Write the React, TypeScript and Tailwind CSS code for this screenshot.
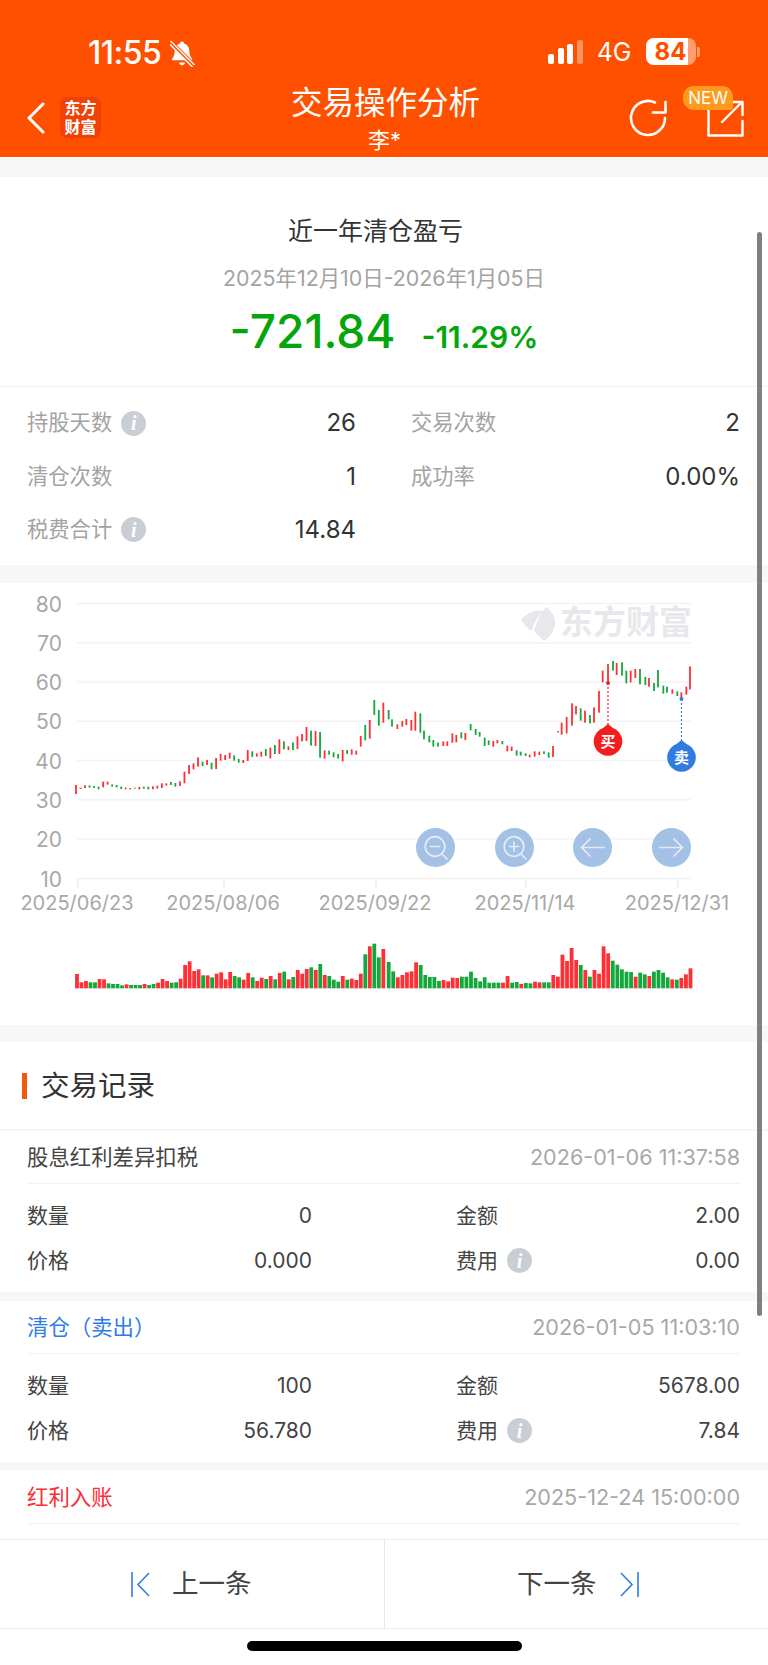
import React from "react";

const FONT = "[font-family:Inter,'Noto_Sans_CJK_SC',sans-serif]";

type C = [number, number, string];
const leftCandles: C[] = [
  [615,642,"r"],[623,627,"r"],[616,624,"r"],[616,623,"g"],[618,624,"g"],[620,628,"g"],[605,622,"r"],[605,614,"r"],[613,620,"g"],[615,622,"g"],[620,627,"g"],[623,628,"r"],[624,628,"r"],[623,626,"g"],[621,628,"r"],[620,626,"g"],[620,628,"g"],[619,628,"r"],[617,626,"r"],[610,624,"r"],[610,617,"r"],[606,615,"g"],[609,620,"g"],[604,618,"r"],[575,610,"r"],[555,582,"r"],[550,568,"r"],[532,560,"r"],[545,558,"g"],[540,555,"r"],[548,568,"g"],[534,567,"r"],[522,542,"r"],[525,540,"r"],[518,536,"r"],[526,542,"g"],[537,548,"g"],[540,549,"r"],[510,543,"r"],[514,531,"g"],[520,530,"r"],[515,530,"r"],[507,528,"g"],[503,535,"r"],[495,522,"g"],[478,522,"r"],[484,508,"g"],[499,510,"r"],[487,510,"g"],[469,507,"r"],[462,484,"r"],[441,483,"r"],[452,497,"g"],[453,498,"r"],[456,533,"g"],[511,536,"r"],[512,524,"g"],[517,532,"g"],[522,536,"g"],[510,544,"r"],[510,522,"g"],[508,524,"r"],[512,524,"r"],[468,500,"r"],[435,481,"g"],[420,476,"r"],[360,405,"g"],[390,437,"g"],[368,428,"r"],
];
const rightCandles: [number, number, number, string][] = [
  [14,390,418,"g"],[24,418,440,"g"],[40,433,447,"r"],[55,423,440,"r"],[67,417,435,"r"],[82,420,452,"r"],[94,395,452,"r"],[109,400,458,"g"],[120,452,478,"g"],[136,467,487,"g"],[148,480,500,"g"],[162,488,500,"g"],[178,484,498,"r"],[190,484,498,"r"],[205,460,488,"r"],[217,465,487,"r"],[232,457,475,"g"],[244,459,480,"r"],[260,432,451,"g"],[275,447,465,"g"],[287,456,470,"g"],[302,473,498,"g"],[314,481,495,"g"],[328,483,500,"r"],[340,480,490,"r"],[355,483,493,"g"],[370,497,514,"r"],[383,500,513,"r"],[398,511,527,"g"],[410,515,527,"g"],[425,520,528,"g"],[437,524,532,"r"],[452,514,530,"r"],[466,515,525,"r"],[480,514,522,"g"],[494,517,533,"g"],[507,498,531,"r"],[522,453,457,"r"],[533,428,464,"r"],[548,411,460,"r"],[564,370,437,"r"],[576,378,403,"r"],[590,385,422,"g"],[603,392,428,"r"],[618,405,430,"g"],[630,382,428,"r"],[645,333,398,"r"],[656,272,307,"r"],[672,252,308,"r"],[687,243,272,"g"],[698,249,285,"r"],[714,247,287,"g"],[727,272,310,"g"],[740,272,307,"r"],[754,267,294,"r"],[768,267,313,"g"],[784,291,315,"g"],[795,294,320,"r"],[810,309,333,"g"],[822,270,322,"g"],[838,317,341,"g"],[849,320,338,"g"],[865,328,341,"r"],[880,334,348,"g"],[892,337,355,"r"],[907,320,344,"r"],[918,259,328,"r"],
];
const leftVol: [number, string][] = [
  [1182,"r"],[1207,"r"],[1203,"r"],[1207,"g"],[1207,"g"],[1197,"r"],[1198,"r"],[1210,"g"],[1212,"g"],[1212,"g"],[1216,"g"],[1213,"r"],[1215,"g"],[1215,"g"],[1215,"g"],[1212,"r"],[1215,"g"],[1212,"g"],[1208,"r"],[1197,"r"],[1203,"r"],[1208,"g"],[1207,"g"],[1196,"r"],[1155,"r"],[1144,"r"],[1173,"r"],[1168,"r"],[1186,"g"],[1186,"r"],[1192,"g"],[1181,"r"],[1177,"r"],[1198,"r"],[1176,"r"],[1188,"g"],[1192,"g"],[1199,"r"],[1179,"r"],[1192,"g"],[1203,"r"],[1193,"r"],[1197,"g"],[1188,"r"],[1198,"g"],[1179,"r"],[1175,"g"],[1198,"r"],[1191,"g"],[1170,"r"],[1181,"r"],[1167,"r"],[1162,"g"],[1170,"r"],[1152,"g"],[1185,"r"],[1188,"g"],[1199,"g"],[1205,"g"],[1188,"r"],[1199,"g"],[1196,"r"],[1200,"r"],[1181,"r"],[1123,"g"],[1099,"r"],[1091,"g"],[1132,"g"],[1107,"r"],
];
const rightVol: [number, string][] = [
  [1146,"g"],[1174,"g"],[1192,"r"],[1185,"r"],[1177,"r"],[1174,"r"],[1147,"r"],[1155,"g"],[1185,"g"],[1191,"g"],[1191,"g"],[1203,"g"],[1200,"r"],[1204,"r"],[1193,"r"],[1194,"r"],[1190,"g"],[1190,"g"],[1175,"g"],[1194,"g"],[1204,"g"],[1192,"g"],[1208,"g"],[1208,"g"],[1208,"g"],[1208,"r"],[1188,"r"],[1208,"g"],[1206,"g"],[1212,"r"],[1209,"g"],[1210,"g"],[1205,"r"],[1207,"r"],[1207,"g"],[1207,"g"],[1185,"r"],[1190,"r"],[1124,"r"],[1143,"r"],[1104,"r"],[1140,"r"],[1155,"g"],[1170,"r"],[1190,"g"],[1170,"r"],[1181,"r"],[1099,"r"],[1120,"r"],[1142,"g"],[1154,"g"],[1168,"g"],[1175,"g"],[1176,"g"],[1190,"r"],[1178,"g"],[1183,"g"],[1188,"r"],[1175,"g"],[1170,"g"],[1178,"g"],[1192,"g"],[1198,"r"],[1199,"g"],[1194,"r"],[1183,"r"],[1165,"r"],
];

const RED = "#ff2f36";
const GREEN = "#14a83c";
const col = (c: string) => (c === "r" ? RED : GREEN);
const Y = (v: number) => 580 + v / 3;

function Chart() {
  const gridY = [603.5, 642.7, 682, 721.3, 760.5, 799.8, 839, 878.5];
  const labels = ["80", "70", "60", "50", "40", "30", "20", "10"];
  const ticks: [number, string][] = [[78, "2025/06/23"], [224, "2025/08/06"], [376, "2025/09/22"], [526, "2025/11/14"], [678, "2025/12/31"]];
  return (
    <svg width={768} height={442} viewBox="0 583 768 442" className="block" style={{ fontFamily: "Inter, sans-serif" }}>
      {gridY.map((y) => (
        <line key={y} x1={77} x2={691} y1={y} y2={y} stroke="#f3f3f3" strokeWidth={1.5} />
      ))}
      {gridY.map((y, i) => (
        <text key={i} x={62} y={y + 8} textAnchor="end" fontSize={21} fill="#a8a8a8">{labels[i]}</text>
      ))}
      {ticks.map(([x, t]) => (
        <g key={t}>
          <line x1={x} x2={x} y1={879} y2={888} stroke="#ececec" strokeWidth={1.5} />
          <text x={x - 1} y={910} textAnchor="middle" fontSize={20} fill="#a8a8a8">{t}</text>
        </g>
      ))}
      {/* watermark */}
      <path d="M521 619 C528 612 538 609 544 611 C537 617 533 624 532 631 C528 629 523 624 521 619Z M546 607 C553 612 556 618 555 625 C553 633 549 638 544 641 C540 637 535 633 534 630 C537 621 541 613 546 607Z" fill="#e8e8ec" />
      <text x={560} y={634} fontSize={33} fontWeight={700} fill="#e8e8ec" style={{ fontFamily: "'Noto Sans CJK SC', sans-serif" }}>东方财富</text>
      {/* candles */}
      {leftCandles.map(([t, b, c], i) => {
        const x = 228 / 3 + (i * (1150 - 228)) / (leftCandles.length - 1) / 3;
        return <rect key={i} x={x - 0.9} y={Y(t)} width={1.8} height={Math.max((b - t) / 3, 1)} fill={col(c)} />;
      })}
      {rightCandles.map(([zx, t, b, c], i) => (
        <rect key={i} x={384 + zx / 3 - 0.9} y={Y(t)} width={1.8} height={Math.max((b - t) / 3, 1)} fill={col(c)} />
      ))}
      {/* volume */}
      {leftVol.map(([t, c], i) => {
        const x = 231 / 3 + (i * (1150 - 231)) / (leftVol.length - 1) / 3;
        return <rect key={i} x={x - 1.9} y={Y(t)} width={3.8} height={(1225 - t) / 3} fill={col(c)} />;
      })}
      {rightVol.map(([t, c], i) => {
        const x = 384 + (14 + i * 13.72) / 3;
        return <rect key={i} x={x - 1.9} y={Y(t)} width={3.8} height={(1225 - t) / 3} fill={col(c)} />;
      })}
      {/* markers */}
      <line x1={608} x2={608} y1={683} y2={726} stroke="#f5222d" strokeWidth={1.2} strokeDasharray="2 2" />
      <circle cx={608} cy={683} r={2} fill="#f5222d" />
      <path d="M608 724 L613 728 A14.3 14.3 0 1 1 603 728 Z" fill="#f41c1c" />
      <text x={608} y={747} textAnchor="middle" fontSize={15} fontWeight={700} fill="#fff" style={{ fontFamily: "'Noto Sans CJK SC', sans-serif" }}>买</text>
      <line x1={681.5} x2={681.5} y1={699} y2={742} stroke="#2f7de1" strokeWidth={1.2} strokeDasharray="2 2" />
      <circle cx={681.5} cy={699} r={2} fill="#2f7de1" />
      <path d="M681.5 740 L686.5 744 A14.3 14.3 0 1 1 676.5 744 Z" fill="#2f7de1" />
      <text x={681.5} y={763} textAnchor="middle" fontSize={15} fontWeight={700} fill="#fff" style={{ fontFamily: "'Noto Sans CJK SC', sans-serif" }}>卖</text>
    </svg>
  );
}

function Info() {
  return (
    <span className="w-[25px] h-[25px] rounded-full bg-[#c9cdd4] flex items-center justify-center text-white text-[20px] font-bold italic [font-family:'Liberation_Serif',serif] leading-none">
      i
    </span>
  );
}

function ChartBtn({ kind }: { kind: "minus" | "plus" | "left" | "right" }) {
  return (
    <div className="w-[39px] h-[39px] rounded-full bg-[#a3c1e5] flex items-center justify-center">
      <svg width={39} height={39} viewBox="0 0 39 39" fill="none" stroke="#e3ecf7" strokeWidth={1.7} strokeLinecap="round" strokeLinejoin="round">
        {kind === "minus" && (<><circle cx={19} cy={18.5} r={9.8} /><path d="M14.5 18.5h9M26 26l5 5" /></>)}
        {kind === "plus" && (<><circle cx={19} cy={18.5} r={9.8} /><path d="M14.5 18.5h9M19 14v9M26 26l5 5" /></>)}
        {kind === "left" && <path d="M31 19.5H9M17 11l-8.5 8.5L17 28" />}
        {kind === "right" && <path d="M8 19.5h22M22 11l8.5 8.5L22 28" />}
      </svg>
    </div>
  );
}

function Stat({ label, value, info }: { label: string; value: string; info?: boolean }) {
  return (
    <div className="flex items-center justify-between w-[329px]">
      <div className="flex items-center gap-[9px] text-[21.3px] text-[#a3a3a3]">
        <span>{label}</span>
        {info && <Info />}
      </div>
      <span className="text-[24px] text-[#333333]">{value}</span>
    </div>
  );
}

function Cell({ label, value, info, w }: { label: string; value: string; info?: boolean; w: string }) {
  return (
    <div className={`flex items-center justify-between ${w}`}>
      <div className="flex items-center gap-[9px] text-[21px] text-[#444444]">
        <span>{label}</span>
        {info && <Info />}
      </div>
      <span className="text-[21px] text-[#444444]">{value}</span>
    </div>
  );
}

function Record({ title, titleCls, time, rows, bodyCls }: { title: string; titleCls: string; time: string; rows: [string, string, string, string]; bodyCls: string }) {
  return (
    <div className="bg-white px-[27px]">
      <div className="h-[53px] flex items-center justify-between border-b border-[#f3f3f3] w-[713px]">
        <span className={`text-[21.4px] ${titleCls}`}>{title}</span>
        <span className="text-[21.6px] text-[#a8a8a8]">{time}</span>
      </div>
      <div className={`w-[713px] ${bodyCls}`}>
        <div className="h-[45px] flex items-center justify-between">
          <Cell label="数量" value={rows[0]} w="w-[285px]" />
          <Cell label="金额" value={rows[1]} w="w-[284px]" />
        </div>
        <div className="h-[45px] flex items-center justify-between">
          <Cell label="价格" value={rows[2]} w="w-[285px]" />
          <Cell label="费用" value={rows[3]} info w="w-[284px]" />
        </div>
      </div>
    </div>
  );
}

export default function App() {
  return (
    <div className={`relative w-[768px] h-[1665px] overflow-hidden bg-white ${FONT}`}>
      {/* header */}
      <header className="h-[157px] bg-[#ff5000] text-white">
        <div className="h-[86px] flex items-start justify-between">
          <div className="flex items-center pl-[88px] pt-[36px]">
            <span className="text-[32px] font-medium leading-[34px] tracking-[-0.5px]">11:55</span>
            <svg width={25} height={27} viewBox="0 0 25 27" className="ml-[9px]">
              <path d="M12 1.5c1.2 0 2 .8 2.1 1.9 3.3 1 5 3.6 5.2 7.2.2 3.6.8 6 2.6 8 .6.8.2 1.7-.8 1.7H3c-1 0-1.4-.9-.8-1.7 1.8-2 2.4-4.4 2.6-8 .2-3.6 1.9-6.2 5.2-7.2.1-1.1.9-1.9 2-1.9Z" fill="#fff" />
              <path d="M9 22.5h6c-.3 1.7-1.5 2.8-3 2.8s-2.700-1.100-3-2.800Z" fill="#fff" />
              <path d="M0 1.500L24 25.500" stroke="#ff5000" strokeWidth={4.500} />
              <path d="M0.500 1L24.500 25M-1 3.500L22.500 27" stroke="#fff" strokeWidth={1.400} />
            </svg>
          </div>
          <div className="flex items-center pt-[38px] pr-[68px] gap-[14px]">
            <div className="flex items-end gap-[3.5px] h-[25px]">
              <span className="w-[6px] h-[10px] rounded-[2px] bg-white" />
              <span className="w-[6px] h-[16px] rounded-[2px] bg-white" />
              <span className="w-[6px] h-[20px] rounded-[2px] bg-white" />
              <span className="w-[6px] h-[24px] rounded-[2px] bg-[#ff9360]" />
            </div>
            <span className="text-[25px] leading-[26px] font-normal">4G</span>
            <div className="flex items-center gap-[1.5px]">
              <div className="relative w-[50px] h-[27px] rounded-[8px] bg-[#ff9c70] overflow-hidden flex items-center justify-center">
                <span className="absolute left-0 top-0 bottom-0 w-[42px] bg-white" />
                <span className="relative text-[24px] font-bold text-[#ff5000] leading-none">84</span>
              </div>
              <span className="w-[3px] h-[10px] rounded-r-[2px] bg-[#ff9c70]" />
            </div>
          </div>
        </div>
        <div className="h-[71px] flex items-start px-[24px]">
          <div className="flex-1 flex items-center gap-[15px] pt-[11px] pl-[3px]">
            <svg width={18} height={32} viewBox="0 0 18 32" fill="none" stroke="#fff" strokeWidth={3} strokeLinecap="round" strokeLinejoin="round">
              <path d="M16 2 L2 16 L16 30" />
            </svg>
            <div className="w-[41px] h-[41px] rounded-[7px] bg-[#ee4208] flex flex-col items-center justify-center text-[16px] leading-[19px] font-bold">
              <span className="h-[19px]">东方</span>
              <span className="h-[19px]">财富</span>
            </div>
          </div>
          <div className="flex flex-col items-center">
            <span className="text-[31.5px] leading-[38px] -mt-[2px]">交易操作分析</span>
            <span className="text-[22px] leading-[28px] mt-[4px] pr-[2px]">李*</span>
          </div>
          <div className="flex-1 relative flex items-center justify-end gap-[40px] pt-[13px]">
            <svg width={38} height={38} viewBox="0 0 38 38" fill="none" stroke="#fff" strokeWidth={2.6} strokeLinecap="round" strokeLinejoin="round">
              <path d="M26 3.5 A17 17 0 1 0 36 19" />
              <path d="M24 13.5 H36.5 V3" />
            </svg>
            <svg width={37} height={37} viewBox="0 0 37 37" fill="none" stroke="#fff" strokeWidth={2.4} strokeLinecap="round" strokeLinejoin="round">
              <path d="M14 7 H1.5 V35.5 H35.5 V21" />
              <path d="M15 22 L35 2 M22 2 H35.5 V15" />
            </svg>
            <span className="absolute right-[11px] top-0 w-[50px] h-[24px] rounded-[11px] rounded-br-[3px] bg-[#ff9a1c] flex items-center justify-center text-[17px] leading-none">NEW</span>
          </div>
        </div>
      </header>
      <div className="h-[20px] bg-[#f7f7f7] border-t border-white" />

      {/* summary */}
      <section className="h-[210px] border-b border-[#f0f0f0] flex flex-col items-center">
        <h1 className="mt-[37px] pr-[17px] text-[25px] leading-[34px] text-[#333333] font-normal">近一年清仓盈亏</h1>
        <p className="mt-[16px] text-[21.4px] leading-[28px] text-[#a3a3a3]">2025年12月10日-2026年1月05日</p>
        <div className="mt-[11px] flex items-baseline gap-[26px] text-[#04a60c]">
          <span className="text-[46px] leading-[56px] font-medium">-721.84</span>
          <span className="text-[30px] leading-[40px] font-semibold">-11.29%</span>
        </div>
      </section>

      {/* stats */}
      <section className="h-[178px] pt-[9px] pl-[27px] pr-[28px]">
        <div className="h-[54px] flex items-center justify-between">
          <Stat label="持股天数" value="26" info />
          <Stat label="交易次数" value="2" />
        </div>
        <div className="h-[53px] flex items-center justify-between">
          <Stat label="清仓次数" value="1" />
          <Stat label="成功率" value="0.00%" />
        </div>
        <div className="h-[53px] flex items-center">
          <Stat label="税费合计" value="14.84" info />
        </div>
      </section>
      <div className="h-[18px] bg-[#f7f7f7]" />

      {/* chart */}
      <section className="relative h-[442px]">
        <Chart />
        <div className="absolute left-[416px] top-[245px] flex gap-[39.6px]">
          <ChartBtn kind="minus" />
          <ChartBtn kind="plus" />
          <ChartBtn kind="left" />
          <ChartBtn kind="right" />
        </div>
      </section>
      <div className="h-[17px] bg-[#f7f7f7]" />

      {/* records */}
      <section className="h-[89px] flex items-center border-b-2 border-[#f5f5f5] pl-[22px] pt-[1px]">
        <span className="w-[5px] h-[26px] bg-[#f05a0e]" />
        <h2 className="ml-[14px] text-[28.5px] font-normal text-[#333333]">交易记录</h2>
      </section>
      <Record title="股息红利差异扣税" titleCls="text-[#444444]" time="2026-01-06 11:37:58" rows={["0", "2.00", "0.000", "0.00"]} bodyCls="pt-[9px] pb-[9px]" />
      <div className="h-[9px] bg-[#f7f7f7]" />
      <Record title="清仓（卖出）" titleCls="text-[#2f7de1]" time="2026-01-05 11:03:10" rows={["100", "5678.00", "56.780", "7.84"]} bodyCls="pt-[9px] pb-[9px]" />
      <div className="h-[8px] bg-[#f7f7f7]" />
      <div className="px-[27px]">
        <div className="h-[54px] pt-[2px] flex items-center justify-between border-b border-[#f3f3f3] w-[713px]">
          <span className="text-[21.4px] text-[#fb2c36]">红利入账</span>
          <span className="text-[21.6px] text-[#a8a8a8]">2025-12-24 15:00:00</span>
        </div>
      </div>

      {/* bottom bar */}
      <div className="h-[15px]" />
      <nav className="h-[90px] flex border-y border-[#eeeeee] bg-white text-[26.5px] text-[#444444]">
        <div className="w-[385px] border-r border-[#e8e8e8] flex items-center pl-[131px] gap-[22px]">
          <svg width={19} height={25} viewBox="0 0 19 25" fill="none" stroke="#2f7de1" strokeWidth={1.6}>
            <path d="M1 0v25M18 1L7 12.5L18 24" />
          </svg>
          <span>上一条</span>
        </div>
        <div className="flex-1 flex items-center pl-[132px] gap-[23px]">
          <span>下一条</span>
          <svg width={19} height={25} viewBox="0 0 19 25" fill="none" stroke="#2f7de1" strokeWidth={1.6}>
            <path d="M18 0v25M1 1L12 12.5L1 24" />
          </svg>
        </div>
      </nav>
      <div className="flex justify-center pt-[12px]">
        <div className="w-[275px] h-[10px] rounded-full bg-black" />
      </div>

      {/* scrollbar */}
      <div className="absolute left-[757px] top-[232px] w-[5px] h-[1084px] rounded-full bg-[#808080]" />
    </div>
  );
}
